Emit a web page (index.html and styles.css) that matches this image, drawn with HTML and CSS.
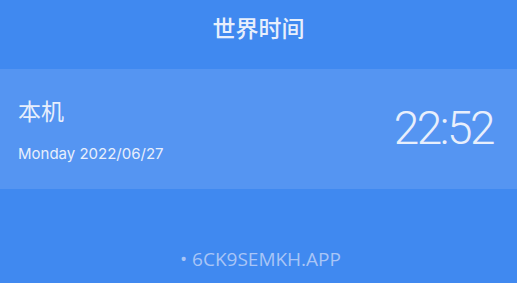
FILE: index.html
```html
<!DOCTYPE html>
<html lang="zh">
<head>
<meta charset="utf-8">
<link rel="stylesheet" href="styles.css">
</head>
<body>
<div class="app">
  <header class="title">世界时间</header>
  <section class="row">
    <div class="info">
      <div class="city">本机</div>
      <div class="date">Monday 2022/06/27</div>
    </div>
    <div class="time">22:52</div>
  </section>
  <footer class="footer">• 6CK9SEMKH.APP</footer>
</div>
</body>
</html>
```
FILE: styles.css
```css
html, body {
  margin: 0;
  padding: 0;
}
body {
  width: 517px;
  height: 283px;
  background: #4089f0;
  overflow: hidden;
  font-family: "Noto Sans", "Noto Sans CJK SC", sans-serif;
  color: #e8effc;
}
.app {
  display: flex;
  flex-direction: column;
  height: 283px;
}
.title {
  height: 69px;
  display: flex;
  align-items: center;
  justify-content: center;
  font-size: 23px;
  font-weight: 500;
  padding-bottom: 16px;
  box-sizing: border-box;
  font-family: "Noto Sans CJK SC", sans-serif;
}
.row {
  height: 120px;
  background: #5595f2;
  display: flex;
  align-items: center;
  justify-content: space-between;
  padding: 0 24px 0 18px;
}
.info {
  display: flex;
  flex-direction: column;
  gap: 20px;
  padding-bottom: 1px;
}
.city {
  font-family: "Noto Sans CJK SC", sans-serif;
  font-size: 23px;
  line-height: 30px;
}
.date {
  font-family: "Inter", sans-serif;
  font-size: 15px;
  line-height: 18px;
}
.time {
  font-family: "Roboto", sans-serif;
  font-weight: 300;
  font-size: 46px;
  line-height: 50px;
  letter-spacing: -2.5px;
  padding-bottom: 2px;
}
.footer {
  flex: 1;
  display: flex;
  align-items: flex-end;
  justify-content: center;
  padding-bottom: 11px;
  padding-left: 4px;
  font-family: "Open Sans", sans-serif;
  font-size: 19px;
  color: #a9c5f6;
}
```
